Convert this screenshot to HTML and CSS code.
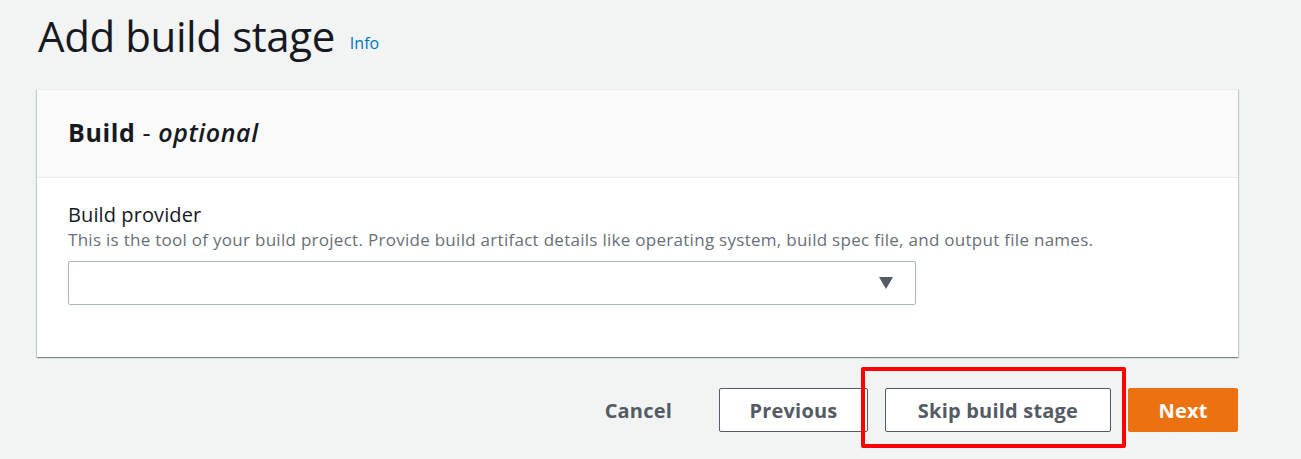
FILE: index.html
```html
<!DOCTYPE html>
<html lang="en">
<head>
<meta charset="utf-8">
<title>Add build stage</title>
<link rel="stylesheet" href="styles.css">
</head>
<body>
<div class="page">
  <header class="page-header">
    <h1 class="page-title">Add build stage</h1>
    <a class="info-link" href="#">Info</a>
  </header>
  <section class="card">
    <div class="card-header">
      <h2 class="card-title">Build <span class="dash">-</span> <em>optional</em></h2>
    </div>
    <div class="card-body">
      <div class="field">
        <label class="field-label">Build provider</label>
        <p class="field-desc">This is the tool of your build project. Provide build artifact details like operating system, build spec file, and output file names.</p>
        <div class="select">
          <svg class="select-caret" width="14" height="12" viewBox="0 0 14 12"><path d="M0 0 H14 L7 12 Z" fill="#545b64"/></svg>
        </div>
      </div>
    </div>
  </section>
  <div class="actions">
    <button class="btn btn-link">Cancel</button>
    <button class="btn btn-normal">Previous</button>
    <div class="highlight-wrap">
      <button class="btn btn-normal btn-skip">Skip build stage</button>
      <span class="highlight"></span>
    </div>
    <button class="btn btn-primary">Next</button>
  </div>
</div>
</body>
</html>
```
FILE: styles.css
```css
* { box-sizing: border-box; }
html, body { margin: 0; padding: 0; }
body {
  background: #f2f3f3;
  font-family: "Open Sans", "Noto Sans", "Liberation Sans", sans-serif;
  color: #16191f;
  width: 1301px;
  height: 459px;
  overflow: hidden;
}
.page {
  padding: 0 63px 0 37px;
}
.page-header {
  display: flex;
  align-items: flex-start;
  gap: 15px;
  height: 89px;
  padding-top: 8px;
  padding-left: 1px;
}
.page-title {
  margin: 0;
  font-size: 42px;
  font-weight: 400;
  line-height: 56px;
  letter-spacing: -0.4px;
}
.info-link {
  color: #0073bb;
  font-size: 16px;
  line-height: 24px;
  text-decoration: none;
  margin-top: 23px;
}
.card {
  background: #fff;
  box-shadow: 0 1px 1px 0 rgba(0,28,36,0.3), 1px 1px 1px 0 rgba(0,28,36,0.15), -1px 1px 1px 0 rgba(0,28,36,0.15);
  border-top: 1px solid #eaeded;
}
.card-header {
  background: #fafafa;
  border-bottom: 1px solid #eaeded;
  height: 88px;
  display: flex;
  align-items: center;
  padding: 0 31px;
  padding-bottom: 3px;
}
.card-title {
  margin: 0;
  font-size: 25px;
  font-weight: 700;
  letter-spacing: 0.6px;
}
.card-title .dash { font-weight: 400; }
.card-title em { font-weight: 600; }
.card-body {
  padding: 24px 31px 52px;
}
.field-label {
  display: block;
  font-size: 20px;
  line-height: 26px;
  letter-spacing: 0.1px;
  color: #16191f;
}
.field-desc {
  margin: 0;
  font-size: 17px;
  line-height: 24px;
  color: #687078;
  letter-spacing: 0.28px;
}
.select {
  margin-top: 9px;
  width: 848px;
  height: 44px;
  border: 1px solid #aab7b8;
  border-radius: 2px;
  background: #fff;
  display: flex;
  align-items: center;
  justify-content: flex-end;
  padding-right: 22px;
}
.actions {
  display: flex;
  justify-content: flex-end;
  align-items: center;
  gap: 17px;
  margin-top: 31px;
}
.btn {
  font-family: inherit;
  font-size: 20px;
  font-weight: 700;
  height: 44px;
  border-radius: 2px;
  padding: 0 10px;
  cursor: pointer;
  letter-spacing: 0.2px;
}
.btn-link {
  background: transparent;
  border: none;
  color: #545b64;
  padding: 0 30px 0 20px;
}
.btn-normal {
  background: #fff;
  border: 1px solid #545b64;
  color: #545b64;
  width: 149px;
}
.btn-skip { width: 226px; }
.btn-primary {
  background: #ec7211;
  border: 1px solid #ec7211;
  color: #fff;
  width: 110px;
}
.highlight-wrap {
  position: relative;
  display: flex;
}
.highlight {
  position: absolute;
  left: -24px;
  right: -15px;
  top: -21px;
  bottom: -16px;
  border: 4px solid #ff0000;
  border-radius: 2px;
  pointer-events: none;
}
```
